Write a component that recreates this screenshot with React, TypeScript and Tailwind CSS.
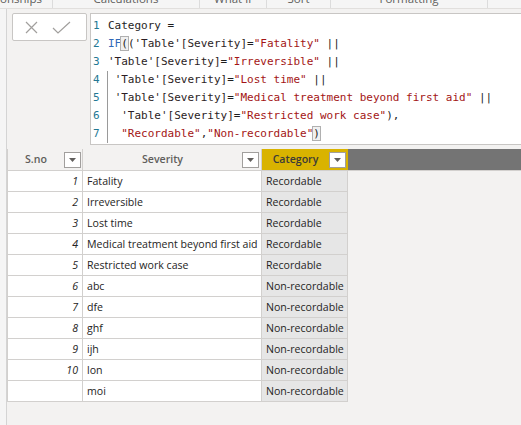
import React from "react";

const ui = { fontFamily: '"Open Sans", "Noto Sans", sans-serif' };
const mono = { fontFamily: '"DejaVu Sans Mono", "Liberation Mono", monospace' };

const rows: [string, string, string][] = [
  ["1", "Fatality", "Recordable"],
  ["2", "Irreversible", "Recordable"],
  ["3", "Lost time", "Recordable"],
  ["4", "Medical treatment beyond first aid", "Recordable"],
  ["5", "Restricted work case", "Recordable"],
  ["6", "abc", "Non-recordable"],
  ["7", "dfe", "Non-recordable"],
  ["8", "ghf", "Non-recordable"],
  ["9", "ijh", "Non-recordable"],
  ["10", "lon", "Non-recordable"],
  ["", "moi", "Non-recordable"],
];

function Str({ children }: { children: React.ReactNode }) {
  return <span className="text-[#a31515]">{children}</span>;
}

function Ref() {
  return <span className="text-[#2b1d24]">'Table'[Severity]</span>;
}

function Line({ n, guide, children }: { n: number; guide?: boolean; children: React.ReactNode }) {
  return (
    <div className="flex h-[18px] items-center">
      <span className="w-[17px] shrink-0 pl-[2px] text-[#237893]">{n}</span>
      <span className={"h-[18px] leading-[18px] whitespace-pre text-[#1e1e1e] " + (guide ? "border-l border-[#9a9a9a] -ml-px" : "")}>
        {children}
      </span>
    </div>
  );
}

function Drop() {
  return (
    <div className="w-[17px] h-[16px] shrink-0 bg-white border border-[#a19f9d] flex items-center justify-center">
      <svg width="7" height="4" viewBox="0 0 7 4">
        <path d="M0 0h7L3.5 4z" fill="#605e5c" />
      </svg>
    </div>
  );
}

export default function App() {
  const ribbon = [
    { label: "Relationships", w: "w-[53px]", end: true },
    { label: "Calculations", w: "w-[147px]" },
    { label: "What if", w: "w-[67px]" },
    { label: "Sort", w: "w-[64px]" },
    { label: "Formatting", w: "w-[157px]" },
  ];

  return (
    <div className="w-[521px] h-[425px] overflow-hidden bg-[#f3f2f1] flex flex-col" style={ui}>
      {/* ribbon group labels, cut off at the top */}
      <div className="h-[9px] shrink-0 flex bg-[#f5f5f5] border-b border-[#e1dfdd] overflow-hidden text-[11.5px] text-[#605e5c]">
        {ribbon.map((g) => (
          <div
            key={g.label}
            className={g.w + " shrink-0 border-r border-[#dcdcdc] flex overflow-hidden whitespace-nowrap " + (g.end ? "justify-end pr-[10px]" : "justify-center")}
          >
            <span className="-mt-[9px] leading-[16px]">{g.label}</span>
          </div>
        ))}
        <div className="flex-1" />
      </div>

      <div className="flex-1 flex min-h-0">
        <div className="w-[7px] shrink-0 bg-[#f5f5f5] border-r border-[#d4d4d4]" />

        <div className="flex-1 flex flex-col min-w-0">
          {/* formula bar */}
          <div className="mt-[4px] flex">
            <div className="ml-[5px] w-[75px] h-[28px] shrink-0 bg-white border border-[#c8c6c4] rounded-[2px] flex items-center">
              <svg className="ml-[12px]" width="13" height="13" viewBox="0 0 13 13">
                <path d="M1 1l11 11M12 1L1 12" stroke="#a19f9d" strokeWidth="1.2" fill="none" />
              </svg>
              <svg className="ml-[14px]" width="19" height="13" viewBox="0 0 19 13">
                <path d="M1 7l5 5L18 1" stroke="#a19f9d" strokeWidth="1.2" fill="none" />
              </svg>
            </div>
            <div className="ml-[3px] flex-1 h-[132px] bg-white border border-r-0 border-[#c8c6c4] pt-[3px] text-[11px] overflow-hidden" style={mono}>
              <Line n={1}>Category =</Line>
              <Line n={2}>
                <span className="text-[#3068b8]">IF</span>
                <span className="bg-[#f0f0f0] outline outline-[#b0b0b0]">(</span>(<Ref />=<Str>"Fatality"</Str> ||
              </Line>
              <Line n={3}>
                <Ref />=<Str>"Irreversible"</Str> ||
              </Line>
              <Line n={4} guide>
                {" "}<Ref />=<Str>"Lost time"</Str> ||
              </Line>
              <Line n={5} guide>
                {" "}<Ref />=<Str>"Medical treatment beyond first aid"</Str> ||
              </Line>
              <Line n={6} guide>
                {"  "}<Ref />=<Str>"Restricted work case"</Str>),
              </Line>
              <Line n={7} guide>
                {"  "}<Str>"Recordable"</Str>,<Str>"Non-recordable"</Str>
                <span className="bg-[#f0f0f0] outline outline-[#b0b0b0]">)</span>
              </Line>
            </div>
          </div>

          {/* table */}
          <div className="mt-[4px] text-[10.6px] text-[#252423]">
            <div className="flex h-[22px] border-b border-[#d2d0ce]">
              <div className="w-[76px] shrink-0 border-l border-r border-[#d2d0ce] flex items-center pr-[1px]">
                <span className="flex-1 text-center text-[#605e5c] font-semibold">S.no</span>
                <Drop />
              </div>
              <div className="w-[179px] shrink-0 border-r border-[#d2d0ce] flex items-center pr-[2px]">
                <span className="flex-1 text-center text-[#605e5c] font-semibold">Severity</span>
                <Drop />
              </div>
              <div className="w-[86px] shrink-0 bg-[#d9b300] flex items-center pr-[2px]">
                <span className="flex-1 text-center text-[#3b3a39] font-semibold">Category</span>
                <Drop />
              </div>
              <div className="flex-1 bg-[#747474]" />
            </div>
            {rows.map(([n, sev, cat], i) => (
              <div key={i} className="flex h-[21px]">
                <div className="w-[76px] shrink-0 bg-white border-l border-r border-b border-[#d2d0ce] flex items-center justify-end pr-[4px] pt-[1px] italic">
                  {n}
                </div>
                <div className="w-[179px] shrink-0 bg-white border-r border-b border-[#d2d0ce] flex items-center pl-[4px] pt-[1px] whitespace-nowrap">
                  {sev}
                </div>
                <div className="w-[86px] shrink-0 bg-[#e6e6e6] border-r border-b border-[#d2d0ce] flex items-center pl-[4px] pt-[1px] whitespace-nowrap">
                  {cat}
                </div>
              </div>
            ))}
          </div>
        </div>
      </div>
    </div>
  );
}
